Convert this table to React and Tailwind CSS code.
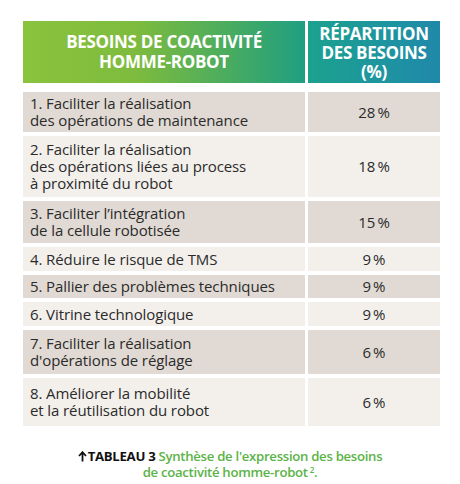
const rows = [
  { label: ["1. Faciliter la réalisation", "des opérations de maintenance"], pct: "28", h: "h-[40px]", bg: "bg-[#e1dad4]" },
  { label: ["2. Faciliter la réalisation", "des opérations liées au process", "à proximité du robot"], pct: "18", h: "h-[61px]", bg: "bg-[#f3f0ec]" },
  { label: ["3. Faciliter l’intégration", "de la cellule robotisée"], pct: "15", h: "h-[42px]", bg: "bg-[#e1dad4]" },
  { label: ["4. Réduire le risque de TMS"], pct: "9", h: "h-[24px]", bg: "bg-[#f3f0ec]" },
  { label: ["5. Pallier des problèmes techniques"], pct: "9", h: "h-[23px]", bg: "bg-[#e1dad4]" },
  { label: ["6. Vitrine technologique"], pct: "9", h: "h-[24px]", bg: "bg-[#f3f0ec]" },
  { label: ["7. Faciliter la réalisation", "d'opérations de réglage"], pct: "6", h: "h-[44px]", bg: "bg-[#e1dad4]" },
  { label: ["8. Améliorer la mobilité", "et la réutilisation du robot"], pct: "6", h: "h-[48px]", bg: "bg-[#f3f0ec]" },
];

export default function App() {
  return (
    <div
      className="w-[460px] h-[484px] bg-white pt-[21px] px-[23px] text-[#2b2b2b]"
      style={{ fontFamily: '"Open Sans", "Noto Sans", sans-serif' }}
    >
      <div className="w-[417px]">
        <div className="flex gap-[3px] h-[62px]">
          <div className="w-[282px] flex items-center justify-center text-center bg-[linear-gradient(90deg,#8ac33c_0%,#7ebb3e_40%,#46ab62_75%,#1f9f82_100%)]">
            <p className="text-white font-bold text-[17px] leading-[20px] tracking-[-0.3px]">
              BESOINS DE COACTIVITÉ
              <br />
              HOMME-ROBOT
            </p>
          </div>
          <div className="flex-1 flex items-center justify-center text-center bg-[linear-gradient(90deg,#1ca18e_0%,#1e94a0_60%,#2088aa_100%)]">
            <p className="text-white font-bold text-[17px] leading-[19px] tracking-[-0.3px]">
              RÉPARTITION
              <br />
              DES BESOINS
              <br />
              (%)
            </p>
          </div>
        </div>

        <div className="mt-[9px] flex flex-col gap-[4px]">
          {rows.map((r) => (
            <div key={r.label[0]} className={`flex gap-[3px] ${r.h}`}>
              <div className={`w-[282px] flex flex-col justify-center pl-[7px] ${r.bg}`}>
                {r.label.map((l) => (
                  <span key={l} className="text-[15px] leading-[17px] tracking-[-0.1px]">
                    {l}
                  </span>
                ))}
              </div>
              <div className={`flex-1 flex items-center justify-center text-[15px] ${r.bg}`}>
                {r.pct}
                <span className="ml-[2px]">%</span>
              </div>
            </div>
          ))}
        </div>
      </div>

      <div className="mt-[22px] text-center text-[13.2px] leading-[16px] font-semibold tracking-[-0.3px]">
        <p className="flex items-center justify-center">
          <svg width="9" height="11" viewBox="0 0 9 11" className="mr-[1px]">
            <path d="M4.5 10.5V2M1 5l3.5-3.8L8 5" fill="none" stroke="#111" strokeWidth="1.8" />
          </svg>
          <span className="font-bold text-[#111]">TABLEAU 3&nbsp;</span>
          <span className="text-[#5bb347]">Synthèse de l'expression des besoins</span>
        </p>
        <p className="text-[#5bb347]">
          de coactivité homme-robot<sup className="text-[8px] ml-[2px]">2</sup>.
        </p>
      </div>
    </div>
  );
}
